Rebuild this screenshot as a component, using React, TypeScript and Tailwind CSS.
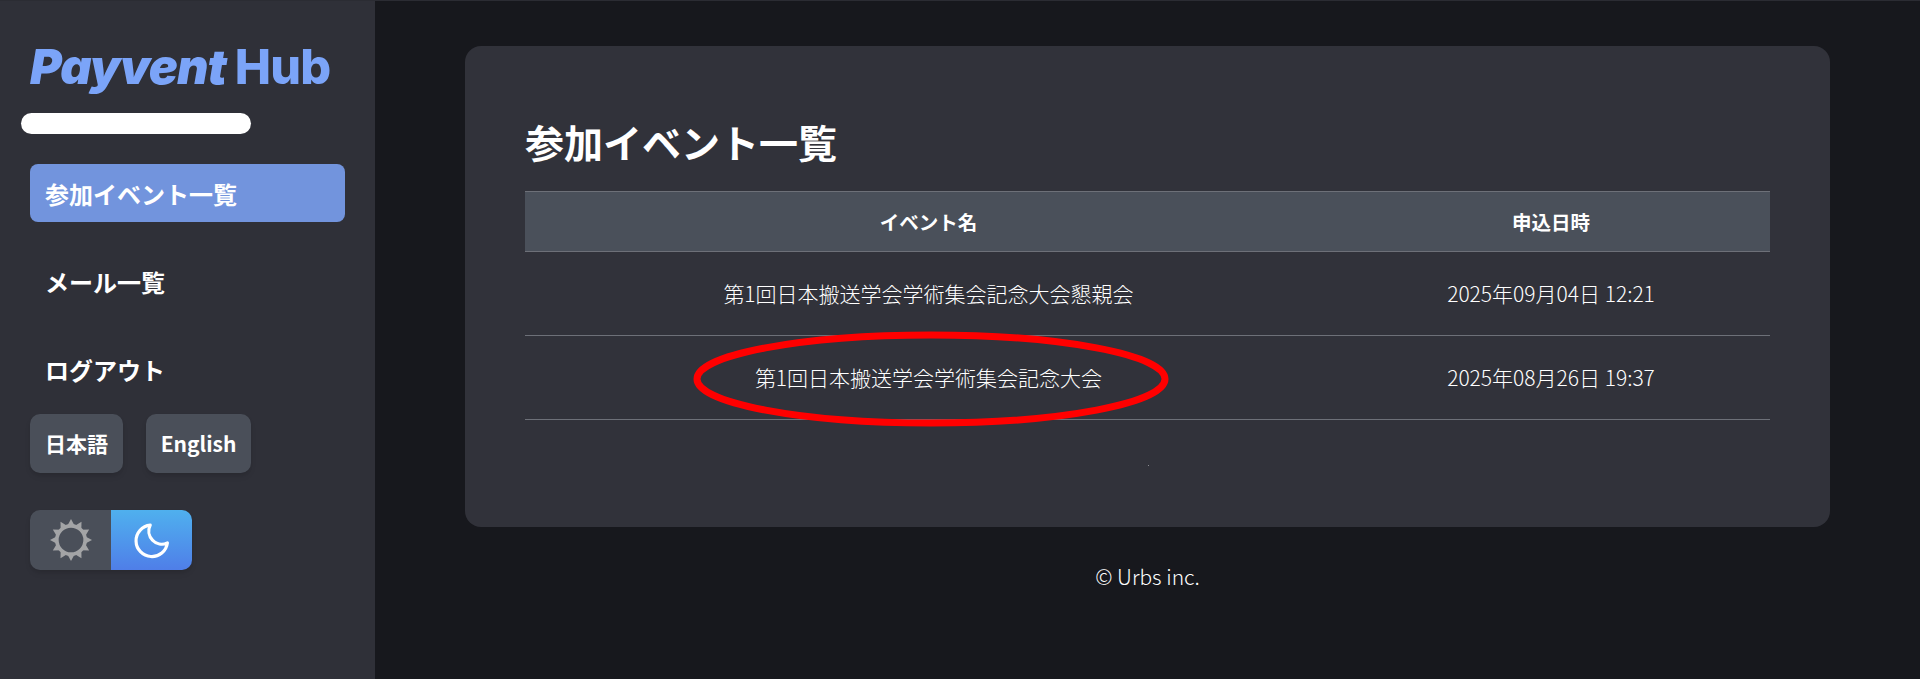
const jp = "font-['Noto_Sans_CJK_JP','Noto_Sans',sans-serif]"

const rows = [
  { name: '第1回日本搬送学会学術集会記念大会懇親会', date: '2025年09月04日 12:21' },
  { name: '第1回日本搬送学会学術集会記念大会', date: '2025年08月26日 19:37' },
]

const rays = Array.from({ length: 12 }, (_, i) => i * 30)

function SunIcon() {
  return (
    <svg width="42" height="42" viewBox="0 0 40 40" fill="none">
      {rays.map((deg) => (
        <path key={deg} d="M20 0 L24.4 8 L15.6 8 Z" fill="#a3a4a6" transform={`rotate(${deg} 20 20)`} />
      ))}
      <circle cx="20" cy="20" r="13.5" stroke="#a3a4a6" strokeWidth="3.5" fill="#4a4f59" />
    </svg>
  )
}

function MoonIcon() {
  return (
    <svg width="42" height="42" viewBox="0 0 24 24" fill="none" stroke="#fff" strokeWidth="1.8" strokeLinejoin="round">
      <path d="M11 3.5a7.5 7.5 0 0 0 9.8 10.2 9 9 0 1 1-9.8-10.2Z" />
    </svg>
  )
}

export default function App() {
  return (
    <div className={`${jp} h-[679px] flex bg-[#17181d] text-white overflow-hidden border-t border-[#2b2c33]`}>
      <aside className="w-[375px] shrink-0 bg-[#2f3038] px-[30px] pt-[36px]">
        <div className="h-[60px] whitespace-nowrap font-['Inter',sans-serif] text-[48.5px] leading-[60px] text-[#7ba4f8] font-black tracking-[-0.9px]">
          <span className="italic">Payvent</span> <span className="font-extrabold">Hub</span>
        </div>
        <div className="-ml-[9px] mt-[16px] w-[230px] h-[21px] rounded-full bg-white" />
        <nav className="mt-[30px] flex flex-col text-[24px] font-bold leading-[60px]">
          <a className="h-[58px] px-[15px] rounded-[8px] bg-[#7294dd]">参加イベント一覧</a>
          <a className="h-[58px] px-[15px] mt-[30px]">メール一覧</a>
          <a className="h-[58px] px-[15px] mt-[30px]">ログアウト</a>
        </nav>
        <div className="mt-[16px] flex gap-[23px] text-[21px] font-bold">
          <button className="w-[93px] h-[59px] rounded-[10px] bg-[#4a4f59] shadow-md">日本語</button>
          <button className="w-[105px] h-[59px] rounded-[10px] bg-[#4a4f59] shadow-md">English</button>
        </div>
        <div className="mt-[37px] w-[162px] h-[60px] flex rounded-[10px] overflow-hidden shadow-md">
          <div className="w-[81px] bg-[#4a4f59] flex items-center justify-center">
            <SunIcon />
          </div>
          <div className="w-[81px] bg-gradient-to-b from-[#4fb0ee] to-[#4f7ee8] flex items-center justify-center">
            <MoonIcon />
          </div>
        </div>
      </aside>

      <main className="flex-1 pt-[45px] px-[90px] relative">
        <section className="h-[481px] rounded-[16px] bg-[#31323a] px-[60px] pt-[67px] relative">
          <h1 className="text-[39px] leading-[56px] font-bold">参加イベント一覧</h1>
          <table className="mt-[22px] w-full border-collapse text-center">
            <thead>
              <tr className="h-[60px] bg-[#4a505a] border-y border-[#6d7078] text-[19.5px] font-bold">
                <th className="w-[807px]">イベント名</th>
                <th>申込日時</th>
              </tr>
            </thead>
            <tbody className="text-[21px] font-light text-white">
              {rows.map((row) => (
                <tr key={row.date} className="h-[84px] border-b border-[#6d7078]">
                  <td>{row.name}</td>
                  <td>{row.date}</td>
                </tr>
              ))}
            </tbody>
          </table>
          <span className="absolute left-[683px] top-[419px] w-[1px] h-[1px] bg-[#8b8d92]" />
          <svg className="absolute left-[228px] top-[285px]" width="476" height="96" viewBox="0 0 476 96" fill="none">
            <ellipse cx="238" cy="48" rx="234" ry="44" stroke="#ff0000" strokeWidth="7" />
          </svg>
        </section>
        <footer className="mt-[34px] text-center text-[21px] leading-[30px] font-light">© Urbs inc.</footer>
      </main>
    </div>
  )
}
